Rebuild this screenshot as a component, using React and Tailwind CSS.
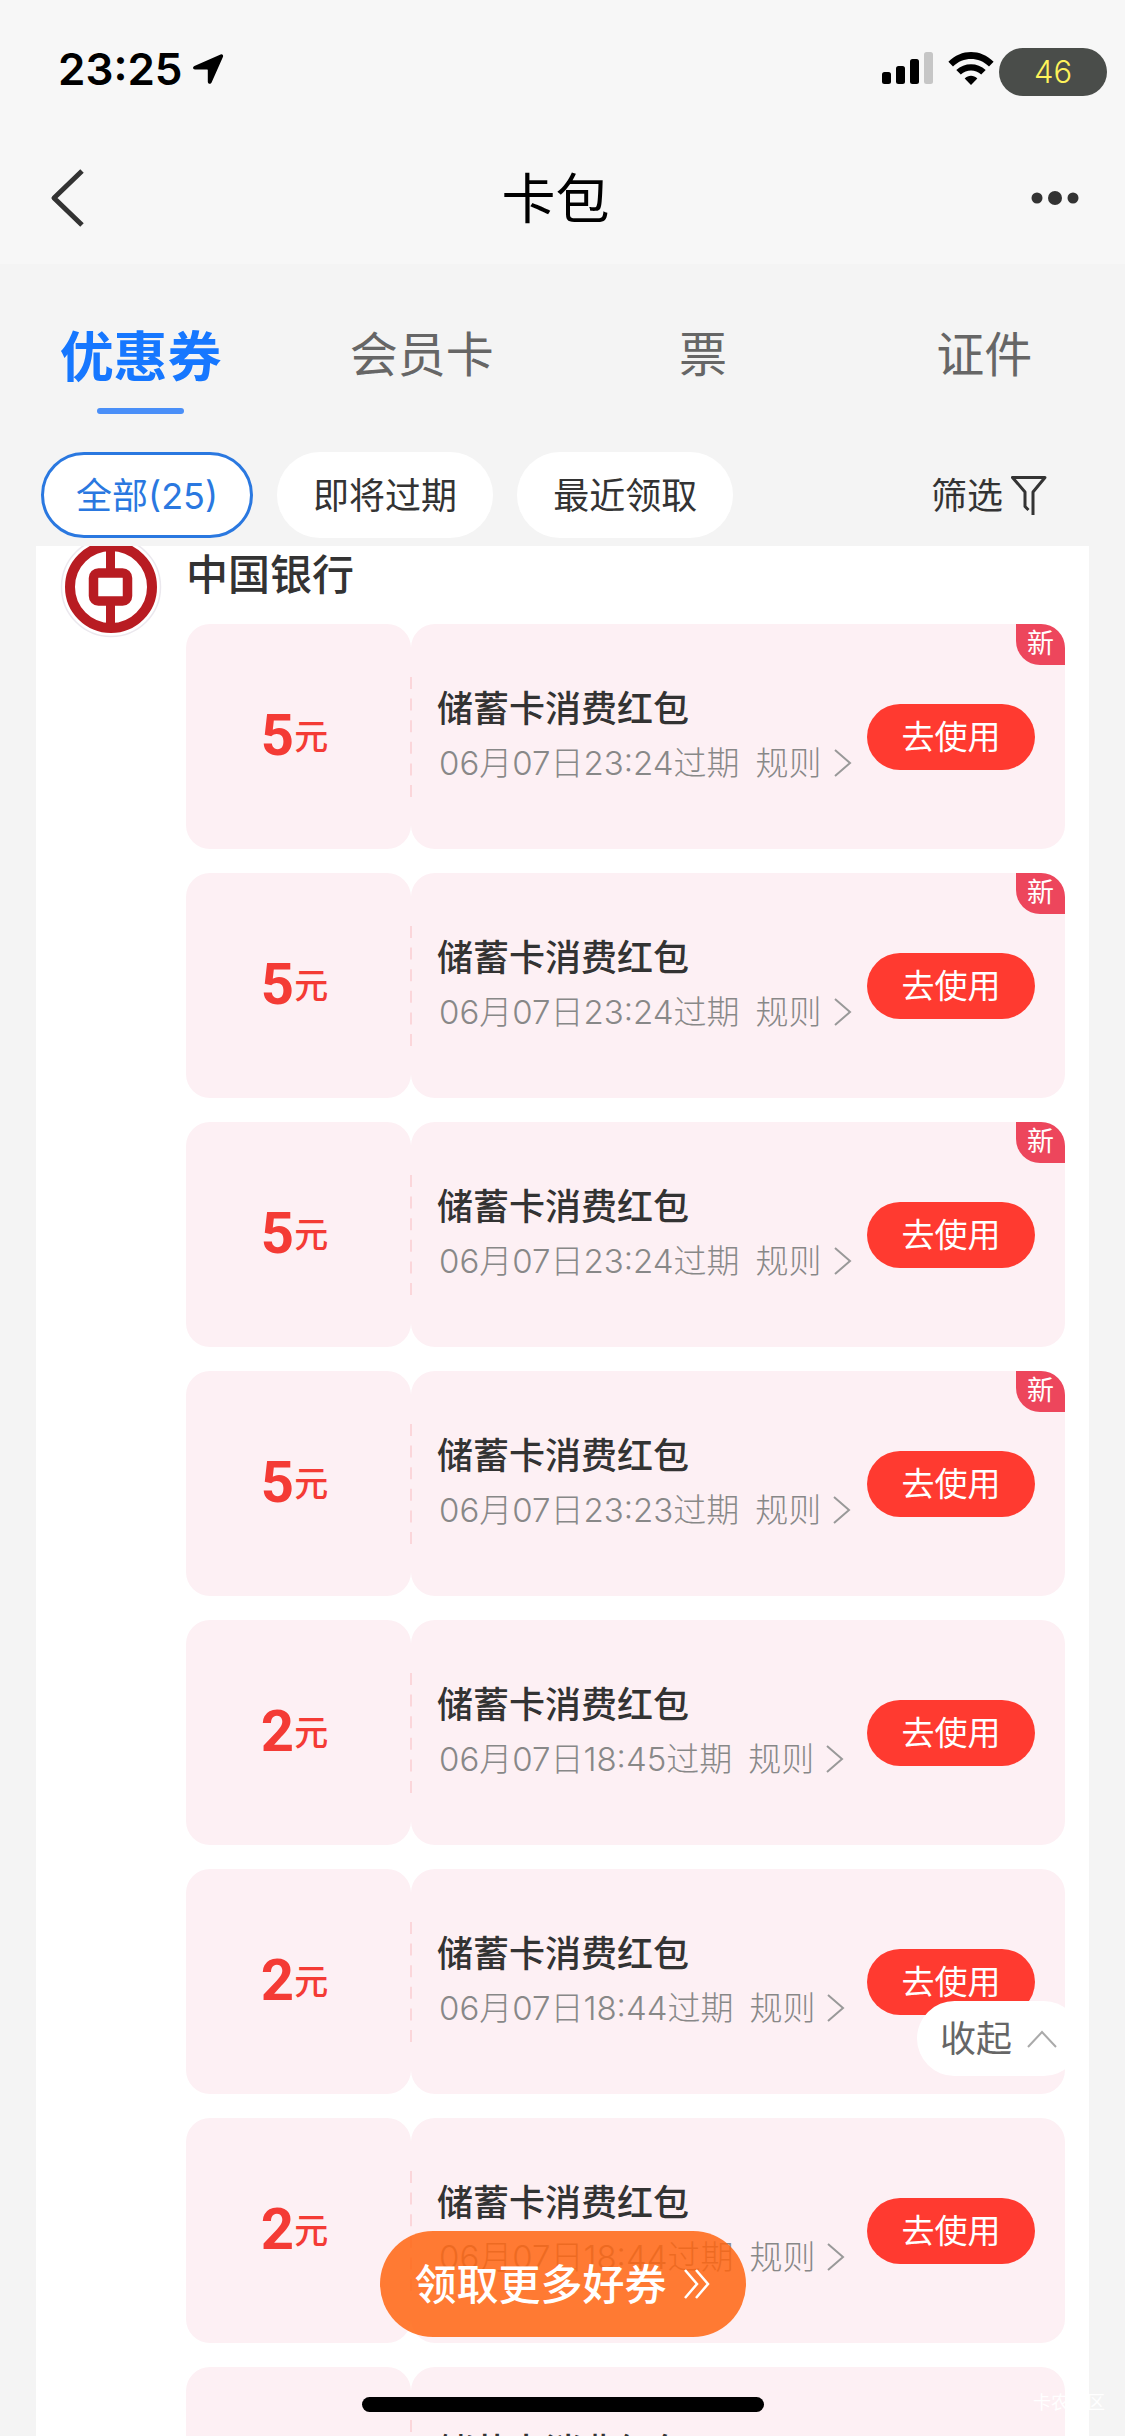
const sans = "font-[Inter,'Noto_Sans_CJK_SC',sans-serif]";

const tabs = ["优惠券", "会员卡", "票", "证件"];

const coupons = [
  { id: 1, amount: 5, expires: "06月07日23:24过期", isNew: true },
  { id: 2, amount: 5, expires: "06月07日23:24过期", isNew: true },
  { id: 3, amount: 5, expires: "06月07日23:24过期", isNew: true },
  { id: 4, amount: 5, expires: "06月07日23:23过期", isNew: true },
  { id: 5, amount: 2, expires: "06月07日18:45过期", isNew: false },
  { id: 6, amount: 2, expires: "06月07日18:44过期", isNew: false },
  { id: 7, amount: 2, expires: "06月07日18:44过期", isNew: false },
  { id: 8, amount: 2, expires: "06月07日18:44过期", isNew: false },
];

function StatusBar() {
  return (
    <div className="flex h-[132px] items-start justify-between pl-[58px] pr-[18px] pt-12">
      <div className="flex items-center gap-[10px]">
        <span className="text-[44px] font-semibold leading-[42px] text-black">23:25</span>
        <svg width="31" height="30" viewBox="0 0 31 30" className="text-black">
          <path d="M27.6.4 1.4 11.9C-.6 12.9-.2 15.4 2 15.5h12.2c.4 0 .6.2.6.6v11.6c0 2.2 2.8 2.9 3.8.8L29.9 3C30.600 1.200 29.400-.3 27.600.4Z" fill="currentColor" />
        </svg>
      </div>
      <div className="flex items-center">
        <svg width="51" height="32" viewBox="0 0 51 32" className="mr-[15px] -mt-2">
          <rect x="0" y="20" width="9" height="12" rx="2.500" />
          <rect x="14" y="14" width="9" height="18" rx="2.500" />
          <rect x="28" y="7" width="9" height="25" rx="2.500" />
          <rect x="42" y="0" width="9" height="32" rx="2.500" fill="#c6c6c6" />
        </svg>
        <svg width="46" height="33" viewBox="0 0 46 33" className="mr-[5px] -mt-2">
          <path d="M23 33 16.700 26.600C20.300 22.800 25.700 22.800 29.300 26.600Z" />
          <path d="M8.300 18C16.500 10.200 29.500 10.200 37.700 18L33.200 22.600C27.200 17.200 18.800 17.200 12.800 22.600Z" />
          <path d="M.4 9.800C13.400-3.200 32.600-3.200 45.600 9.800L41 14.400C30.500 4.600 15.500 4.600 5 14.400Z" />
        </svg>
        <span className="flex h-12 w-[108px] items-center justify-center rounded-full bg-[#4a4d4a] text-[31px] font-light text-[#fff35a]">46</span>
      </div>
    </div>
  );
}

function TitleBar() {
  return (
    <header className="flex h-[132px] items-center justify-between px-[46px]">
      <button aria-label="返回" className="w-[42px]">
        <svg width="42" height="60" viewBox="0 0 42 60" fill="none" stroke="#333" strokeWidth="5">
          <path d="M36 3 8 30 36 57" strokeLinejoin="round" />
        </svg>
      </button>
      <h1 className="pr-2 pt-1 text-center text-[54px] leading-[72px] text-black">卡包</h1>
      <button aria-label="更多" className="w-[48px]">
        <svg width="48" height="16" viewBox="0 0 48 16" fill="#333">
          <circle cx="6" cy="8" r="5.500" />
          <circle cx="24" cy="8" r="7" />
          <circle cx="42" cy="8" r="5.500" />
        </svg>
      </button>
    </header>
  );
}

function Tabs() {
  return (
    <nav className="grid grid-cols-4 items-start pt-14">
      {tabs.map((tab, i) => (
        <button key={tab} className="flex flex-col items-center">
          {i === 0 ? (
            <>
              <span className="text-[54px] font-bold leading-[76px] text-[#1677ff]">{tab}</span>
              <span className="mt-3 h-[6px] w-[87px] rounded-full bg-[#4a8ff8]" />
            </>
          ) : (
            <span className="text-[48px] leading-[70px] text-[#666]">{tab}</span>
          )}
        </button>
      ))}
    </nav>
  );
}

function Filters() {
  return (
    <div className="flex items-center pl-[41px] pr-[78px] pt-[38px] pb-2 text-[36px] text-[#333]">
      <div className="flex flex-1 gap-6">
        <button className="h-[86px] rounded-full border-3 border-[#2a78e0] bg-white px-8 pt-[2px] text-[#2a78e0]">全部(25)</button>
        <button className="h-[86px] rounded-full bg-white px-9 pt-[2px]">即将过期</button>
        <button className="h-[86px] rounded-full bg-white px-9 pt-[2px]">最近领取</button>
      </div>
      <button className="flex items-center gap-2 pt-[2px]">
        筛选
        <svg width="36" height="42" viewBox="0 0 36 42" fill="none" stroke="#333" strokeWidth="3" strokeLinejoin="round">
          <path d="M17.500 35 14 31.500V17L1.500 2.500H34L22 17V40" />
        </svg>
      </button>
    </div>
  );
}

function BankLogo() {
  return (
    <svg width="102" height="102" viewBox="0 0 102 102" fill="none" className="shrink-0">
      <circle cx="51" cy="51" r="49.500" fill="#fff" stroke="#ebe8ee" strokeWidth="1.500" />
      <circle cx="51" cy="51" r="41" stroke="#b81c22" strokeWidth="10" />
      <rect x="33.500" y="37" width="34" height="28" rx="5" stroke="#b81c22" strokeWidth="9.500" />
      <path d="M50.500 10V33M50.500 69V92" stroke="#b81c22" strokeWidth="9" />
    </svg>
  );
}

function Coupon({ amount, expires, isNew }) {
  return (
    <li className="relative flex h-[225px]">
      <div className="flex w-[225px] shrink-0 items-start justify-center rounded-3xl bg-[#fdf0f4] pr-2 pt-[75px] font-bold text-[#f43b35]">
        <span className="font-[Roboto,sans-serif] text-[58px] leading-[72px]">{amount}</span>
        <span className="text-[34px] font-medium leading-[76px]">元</span>
      </div>
      <div className="flex min-w-0 flex-1 items-center rounded-3xl bg-[#fdf0f4] pl-[26px] pr-[30px]">
        <div className="min-w-0 flex-1 whitespace-nowrap pb-[2px]">
          <h3 className="text-[36px] font-medium leading-[54px] text-[#333]">储蓄卡消费红包</h3>
          <div className="flex items-center gap-4 pl-[2px] text-[33px] font-light leading-[54px] text-[#888]">
            <span>{expires}</span>
            <button className="flex items-center gap-3">
              规则
              <svg width="18" height="30" viewBox="0 0 18 30" fill="none" stroke="#999" strokeWidth="2">
                <path d="M1 2 16 15 1 28" />
              </svg>
            </button>
          </div>
        </div>
        <button className="h-[66px] w-[168px] shrink-0 rounded-full bg-[#ff3a30] pt-[2px] text-[33px] text-white">去使用</button>
      </div>
      <svg width="2" height="120" viewBox="0 0 2 120" className="absolute left-[224px] top-[53px]">
        <path d="M1 0V120" stroke="#fbd6da" strokeWidth="2" strokeDasharray="12 9.600" />
      </svg>
      {isNew && (
        <span className="absolute right-0 top-0 flex h-[41px] w-[49px] items-center justify-center rounded-tr-3xl rounded-bl-3xl bg-[#ed465c] text-[27px] text-white">新</span>
      )}
    </li>
  );
}

export default function App() {
  return (
    <div className={`${sans} relative flex h-screen flex-col overflow-hidden bg-[#f4f4f4]`}>
      <div className="bg-[#f7f7f7]">
        <StatusBar />
        <TitleBar />
      </div>
      <Tabs />
      <Filters />

      <main className="mx-9 min-h-0 flex-1 overflow-hidden bg-white px-6">
        <section className="flex">
          <div className="-mt-[10px] w-[126px] shrink-0">
            <BankLogo />
          </div>
          <div className="min-w-0 flex-1">
            <h2 className="pb-5 text-[42px] font-medium leading-[58px] text-[#333]">中国银行</h2>
            <ul className="flex flex-col gap-6">
              {coupons.map((c) => (
                <Coupon key={c.id} {...c} />
              ))}
            </ul>
          </div>
        </section>
      </main>

      <button className="absolute bottom-[360px] right-11 flex h-[75px] w-[164px] items-center gap-[15px] rounded-full bg-white pl-[23px] text-[36px] text-[#666]">
        收起
        <svg width="30" height="18" viewBox="0 0 30 18" fill="none" stroke="#aaa" strokeWidth="2">
          <path d="M1 17 15 2 29 17" />
        </svg>
      </button>

      <button className="absolute bottom-[99px] left-1/2 flex h-[106px] w-[366px] -translate-x-1/2 items-center justify-center gap-4 rounded-full bg-[#ff6510]/85 text-[42px] font-medium text-white">
        领取更多好券
        <svg width="28" height="32" viewBox="0 0 28 32" fill="none" stroke="#fff" strokeWidth="2.500">
          <path d="M2 2 14 16 2 30M13 2 25 16 13 30" />
        </svg>
      </button>

      <div className="absolute bottom-6 left-1/2 h-[15px] w-[402px] -translate-x-1/2 rounded-full bg-black" />
      <span className="absolute bottom-5 right-5 text-[18px] text-white">卡农社区</span>
    </div>
  );
}
